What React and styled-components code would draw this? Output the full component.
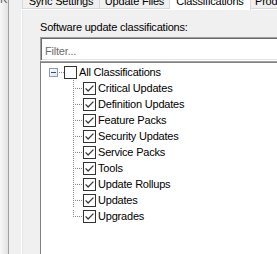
import React from 'react'
import styled, { createGlobalStyle } from 'styled-components'

const GlobalStyle = createGlobalStyle`
  html, body {
    margin: 0;
    padding: 0;
    overflow: hidden;
    background: #f0f0f0;
  }
  * { box-sizing: border-box; }
  body {
    font-family: "Liberation Sans", Arial, sans-serif;
    font-size: 11px;
    letter-spacing: -0.2px;
    color: #000;
  }
`

const Window = styled.div`
  display: flex;
  width: 277px;
  height: 254px;
  overflow: hidden;
  background: #f0f0f0;
`

const SidePane = styled.div`
  width: 9px;
  flex-shrink: 0;
  overflow: hidden;
  background: linear-gradient(to right, #f8f8f8, #e2e2e2);
  border-right: 1px solid #a0a0a0;
`

const SidePaneLabel = styled.div`
  margin-top: -6px;
  padding-right: 1px;
  text-align: right;
  line-height: 11px;
  color: #606060;
`

const TabControl = styled.div`
  margin-left: 12px;
  width: 290px;
  flex-shrink: 0;
  display: flex;
  flex-direction: column;
`

const TabStrip = styled.div`
  display: flex;
  align-items: flex-start;
  height: 9px;
  padding-left: 1px;
`

const Tab = styled.div`
  width: ${p => p.$w}px;
  height: ${p => (p.$active ? 10 : 9)}px;
  flex-shrink: 0;
  display: flex;
  align-items: flex-end;
  overflow: hidden;
  position: relative;
  z-index: ${p => (p.$active ? 1 : 0)};
  background: ${p => (p.$active ? '#fff' : '#f0f0f0')};
  border-right: 1px solid #d9d9d9;
  border-left: ${p => (p.$first ? '1px solid #d9d9d9' : 'none')};
  border-bottom: ${p => (p.$active ? 'none' : '1px solid #d9d9d9')};
  padding-bottom: ${p => (p.$active ? 2 : 0)}px;
  justify-content: ${p => (p.$clip ? 'flex-start' : 'center')};
  padding-left: ${p => (p.$clip ? 4 : 0)}px;
  line-height: 14px;
  white-space: nowrap;
`

const TabPage = styled.div`
  flex: 1;
  display: flex;
  flex-direction: column;
  background: #f0f0f0;
  border-left: 1px solid #fff;
  border-top: 1px solid #fff;
  box-shadow: inset 1px 0 #e6e6e6;
  padding: 11px 0 0 18px;
`

const Caption = styled.div`
  line-height: 13px;
  white-space: nowrap;
`

const FilterBox = styled.div`
  height: 24px;
  margin-top: 3px;
  background: #fff;
  border-top: 1px solid #a0a0a0;
  border-left: 1px solid #a0a0a0;
  border-bottom: 1px solid #fff;
  box-shadow: inset 1px 1px #696969, inset 0 -1px #e3e3e3;
  padding: 7px 0 0 4px;
  line-height: 13px;
  color: #6d6d6d;
`

const TreeBox = styled.div`
  flex: 1;
  background: #fff;
  border-top: 1px solid #a0a0a0;
  border-left: 1px solid #7f7f7f;
  box-shadow: inset 0 1px #828282;
  padding-top: 2px;
`

const Row = styled.div`
  display: flex;
  align-items: center;
  height: 16px;
  padding-left: ${p => p.$indent}px;
`

const NodeText = styled.span`
  margin-left: 2px;
  line-height: 16px;
  white-space: nowrap;
`

const DOT = '#8c8c8c'

const Expander = () => (
  <svg width="9" height="9" viewBox="0 0 9 9">
    <defs>
      <linearGradient id="exp" x1="0" y1="0" x2="1" y2="1">
        <stop offset="0" stopColor="#ffffff" />
        <stop offset="1" stopColor="#dfe3ea" />
      </linearGradient>
    </defs>
    <rect x="0.5" y="0.5" width="8" height="8" fill="url(#exp)" stroke="#8e9cb6" shapeRendering="crispEdges" />
    <rect x="2" y="4" width="5" height="1" fill="#2f4a8a" />
  </svg>
)

const RootLink = () => (
  <svg width="6" height="16" viewBox="0 0 6 16">
    {[1, 3, 5].map(x => <rect key={x} x={x} y="8" width="1" height="1" fill={DOT} />)}
  </svg>
)

const ChildLink = ({ last }) => {
  const ys = []
  for (let y = last ? 2 : 0; y < (last ? 9 : 16); y += 2) ys.push(y)
  return (
    <svg width="10" height="16" viewBox="0 0 10 16">
      {ys.map(y => <rect key={'v' + y} x="0" y={y} width="1" height="1" fill={DOT} />)}
      {[2, 4, 6, 8].map(x => <rect key={'h' + x} x={x} y="8" width="1" height="1" fill={DOT} />)}
    </svg>
  )
}

const CheckBox = ({ checked }) => (
  <svg width="13" height="13" viewBox="0 0 13 13">
    <rect x="0.5" y="0.5" width="12" height="12" fill="#fff" stroke="#333" shapeRendering="crispEdges" />
    {checked && (
      <path d="M2.6 6.4 L5.1 9 L10.4 3.6" fill="none" stroke="#3a3a3a" strokeWidth="1.25" />
    )}
  </svg>
)

const classifications = [
  'Critical Updates',
  'Definition Updates',
  'Feature Packs',
  'Security Updates',
  'Service Packs',
  'Tools',
  'Update Rollups',
  'Updates',
  'Upgrades',
]

const tabs = [
  { label: 'Sync Settings', w: 78, first: true },
  { label: 'Update Files', w: 70 },
  { label: 'Classifications', w: 81, active: true },
  { label: 'Products', w: 50, clip: true },
]

export default function App() {
  return (
    <>
      <GlobalStyle />
      <Window>
        <SidePane>
          <SidePaneLabel>K</SidePaneLabel>
        </SidePane>
        <TabControl>
          <TabStrip>
            {tabs.map(t => (
              <Tab key={t.label} $w={t.w} $first={t.first} $active={t.active} $clip={t.clip}>
                {t.label}
              </Tab>
            ))}
          </TabStrip>
          <TabPage>
            <Caption>Software update classifications:</Caption>
            <FilterBox>Filter...</FilterBox>
            <TreeBox>
              <Row $indent={8}>
                <Expander />
                <RootLink />
                <CheckBox />
                <NodeText>All Classifications</NodeText>
              </Row>
              {classifications.map((name, i) => (
                <Row key={name} $indent={32}>
                  <ChildLink last={i === classifications.length - 1} />
                  <CheckBox checked />
                  <NodeText>{name}</NodeText>
                </Row>
              ))}
            </TreeBox>
          </TabPage>
        </TabControl>
      </Window>
    </>
  )
}
